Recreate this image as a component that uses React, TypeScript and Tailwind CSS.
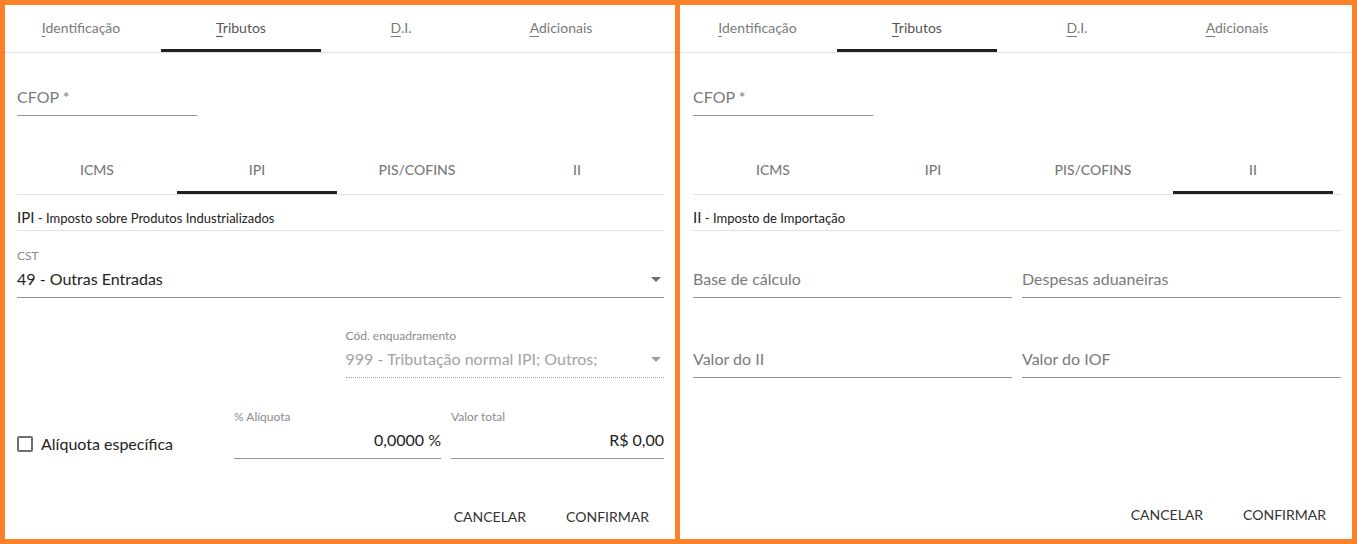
import React from "react";

const FONT = { fontFamily: "Lato, 'Open Sans', sans-serif" };

function Arrow({ light }: { light?: boolean }) {
  return (
    <svg width="10" height="5" viewBox="0 0 10 5" className="shrink-0">
      <path d="M0 0 L10 0 L5 5 Z" fill={light ? "#9e9e9e" : "#6f6f6f"} />
    </svg>
  );
}

function TopTabs({ firstW, firstPad }: { firstW: string; firstPad: string }) {
  const tabs = [
    { f: "I", r: "dentificação" },
    { f: "T", r: "ributos", active: true },
    { f: "D", r: ".I." },
    { f: "A", r: "dicionais" },
  ];
  return (
    <div className="flex h-[48px] border-b border-[#e0e0e0] shrink-0">
      {tabs.map((t, i) => (
        <div
          key={i}
          className={`${i === 0 ? `${firstW} ${firstPad}` : "w-[160px]"} h-full flex items-center justify-center text-[14px] ${
            t.active ? "text-[#555555] border-b-[3px] border-[#212121] pt-[1px]" : "text-[#7a7a7a] pb-[2px]"
          }`}
        >
          <span>
            <span className="underline underline-offset-[3px]">{t.f}</span>
            {t.r}
          </span>
        </div>
      ))}
    </div>
  );
}

function SubTabs({ active }: { active: number }) {
  const tabs = ["ICMS", "IPI", "PIS/COFINS", "II"];
  return (
    <div className="flex h-[48px] mt-[31px] border-b border-[#e0e0e0] shrink-0">
      {tabs.map((t, i) => (
        <div
          key={t}
          className={`w-[160px] h-full flex items-center justify-center text-[14px] font-medium text-[#7a7a7a] ${
            i === active ? "border-b-[3px] border-[#212121] pt-[1px]" : "pb-[2px]"
          }`}
        >
          {t}
        </div>
      ))}
    </div>
  );
}

function CfopField() {
  return (
    <div className="w-[180px] h-[31px] mt-[32px] flex items-end pb-[6px] border-b border-[#949494] shrink-0">
      <span className="text-[16px] leading-[24px] text-[#7a7a7a]">CFOP *</span>
    </div>
  );
}

function Buttons({ pb }: { pb: string }) {
  return (
    <div className={`mt-auto flex justify-end gap-[8px] -mr-[1px] ${pb}`}>
      <button className="h-[36px] px-4 text-[14px] text-[#333333] uppercase">Cancelar</button>
      <button className="h-[36px] px-4 text-[14px] text-[#333333] uppercase">Confirmar</button>
    </div>
  );
}

function PlaceholderField({ label }: { label: string }) {
  return (
    <div className="flex items-end pb-[6px] border-b border-[#949494] h-[31px]">
      <span className="text-[16px] leading-[24px] text-[#7a7a7a]">{label}</span>
    </div>
  );
}

export default function App() {
  return (
    <div className="w-[1357px] h-[544px] bg-[#fd8128] p-[5px] flex gap-[5px]" style={FONT}>
      {/* Left panel */}
      <div className="w-[670px] h-[534px] bg-white flex flex-col overflow-hidden">
        <TopTabs firstW="w-[156px]" firstPad="pr-[4px]" />
        <div className="flex-1 flex flex-col pl-[12px] pr-[11px]">
          <CfopField />
          <SubTabs active={1} />
          <div className="h-[36px] flex items-end pb-[2px] border-b border-[#e0e0e0] text-[#222222]">
            <span className="leading-[20px]">
              <span className="text-[15px]">IPI</span>
              <span className="text-[13px]"> - Imposto sobre Produtos Industrializados</span>
            </span>
          </div>
          {/* CST */}
          <div className="mt-[17px]">
            <div className="text-[12px] leading-[16px] text-[#8a8a8a]">CST</div>
            <div className="mt-[3px] pb-[6px] border-b border-[#949494] flex items-center justify-between pr-[3px]">
              <span className="text-[16px] leading-[24px] text-[#222222]">49 - Outras Entradas</span>
              <Arrow />
            </div>
          </div>
          {/* Cód enquadramento */}
          <div className="grid grid-cols-2 gap-x-[10px] mt-[30px]">
            <div />
            <div>
              <div className="text-[12px] leading-[16px] text-[#8a8a8a]">Cód. enquadramento</div>
              <div className="mt-[3px] pb-[6px] border-b border-dotted border-[#a0a0a0] flex items-center justify-between pr-[3px]">
                <span className="text-[16px] leading-[24px] text-[#a3a3a3]">999 - Tributação normal IPI; Outros;</span>
                <Arrow light />
              </div>
            </div>
          </div>
          {/* Bottom row */}
          <div className="grid grid-cols-[207px_207px_1fr] gap-x-[10px] mt-[31px]">
            <div className="flex items-end pb-[3px]">
              <div className="flex items-center h-[24px] gap-[8px]">
                <div className="w-[16px] h-[16px] border-2 border-[#6f6f6f] rounded-[2px]" />
                <span className="text-[16px] text-[#222222]">Alíquota específica</span>
              </div>
            </div>
            <div>
              <div className="text-[12px] leading-[16px] text-[#8a8a8a]">% Alíquota</div>
              <div className="mt-[3px] pb-[6px] border-b border-[#949494] text-right">
                <span className="text-[16px] leading-[24px] text-[#222222]">0,0000 %</span>
              </div>
            </div>
            <div>
              <div className="text-[12px] leading-[16px] text-[#8a8a8a]">Valor total</div>
              <div className="mt-[3px] pb-[6px] border-b border-[#949494] text-right">
                <span className="text-[16px] leading-[24px] text-[#222222]">R$ 0,00</span>
              </div>
            </div>
          </div>
          <Buttons pb="pb-[5px]" />
        </div>
      </div>

      {/* Right panel */}
      <div className="w-[672px] h-[534px] bg-white flex flex-col overflow-hidden">
        <TopTabs firstW="w-[157px]" firstPad="pr-[2px]" />
        <div className="flex-1 flex flex-col pl-[13px] pr-[11px]">
          <CfopField />
          <SubTabs active={3} />
          <div className="h-[36px] flex items-end pb-[2px] border-b border-[#e0e0e0] text-[#222222]">
            <span className="leading-[20px]">
              <span className="text-[15px]">II</span>
              <span className="text-[13px]"> - Imposto de Importação</span>
            </span>
          </div>
          <div className="grid grid-cols-2 gap-x-[10px] mt-[36px]">
            <PlaceholderField label="Base de cálculo" />
            <PlaceholderField label="Despesas aduaneiras" />
          </div>
          <div className="grid grid-cols-2 gap-x-[10px] mt-[49px]">
            <PlaceholderField label="Valor do II" />
            <PlaceholderField label="Valor do IOF" />
          </div>
          <Buttons pb="pb-[7px]" />
        </div>
      </div>
    </div>
  );
}
